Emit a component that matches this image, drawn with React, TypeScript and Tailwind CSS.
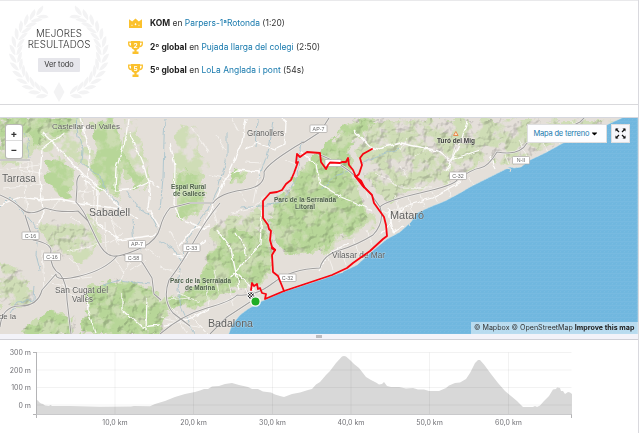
import { FaCaretDown } from 'react-icons/fa';

type Shape = 'crown' | 'cup';

interface Achievement {
  icon: Shape;
  rank?: string;
  title: string;
  segment: string;
  time: string;
}

const achievements: Achievement[] = [
  { icon: 'crown', title: 'KOM', segment: 'Parpers-1ªRotonda', time: '1:20' },
  { icon: 'cup', rank: '2', title: '2º global', segment: 'Pujada llarga del colegi', time: '2:50' },
  { icon: 'cup', rank: '5', title: '5º global', segment: 'LoLa Anglada i pont', time: '54s' },
];

function AchievementIcon({ icon, rank }: { icon: Shape; rank?: string }) {
  if (icon === 'crown') {
    return (
      <svg width="15" height="15" viewBox="0 0 15 15" fill="#fbc12d">
        <path d="M1 3.2 4.2 5.4 7.5 2.6l3.3 2.8L14 3.2V12H1z" />
        <path d="M7.5 7 8.500 8.200 7.5 9.400 6.500 8.200zM4 8.500l.7.7-.7.7-.7-.7zM11 8.500l.7.7-.7.7-.7-.7z" fill="#fff" />
      </svg>
    );
  }
  return (
    <svg width="15" height="15" viewBox="0 0 15 15" fill="#fbc12d">
      <path d="M3 1h9v4.5c0 2.3-1.6 4-3.4 4.4v1.6h1.9V14h-6v-2.5h1.9V9.900C4.600 9.500 3 7.800 3 5.500z" />
      <path d="M3 2.200H.7v1.500c0 1.600 1 2.700 2.800 3M12 2.200h2.300v1.500c0 1.600-1 2.700-2.800 3" fill="none" stroke="#fbc12d" strokeWidth="1.300" />
      <text x="7.500" y="7.600" textAnchor="middle" fontSize="6.500" fontWeight="700" fontFamily="Inter, sans-serif" fill="#fff">
        {rank}
      </text>
    </svg>
  );
}

const leafAngles = Array.from({ length: 14 }, (_, i) => 26 + i * 10.3);

function Laurel() {
  return (
    <svg className="absolute inset-0" width="104" height="102" viewBox="0 0 104 102" fill="#f3f3f4">
      {[1, -1].map((side) => (
        <g key={side} transform={`translate(52 51) scale(${side} 1)`}>
          {leafAngles.map((angle) => (
            <g key={angle} transform={`rotate(${angle}) translate(0 -43)`}>
              <path d="M4 -.4Q2-6-6.500-6.800Q-5.500-.8 4-.4z" />
              <path d="M4 .4Q2 5.500-6.500 6.500Q-5.500 1 4 .4z" />
            </g>
          ))}
        </g>
      ))}
      <path d="M52 80l5.500 10-5.500 10-5.500-10z" />
    </svg>
  );
}

function BestResults() {
  return (
    <section className="flex h-[105px] border-y border-t-[#e9e9eb] border-b-[#d9d9dc]">
      <div className="relative ml-[7px] mt-px flex h-[102px] w-[104px] flex-col items-center pt-[25.500px]">
        <Laurel />
        <h3 className="relative text-center text-[9.800px] font-light leading-[11.500px] text-[#333]">
          MEJORES
          <br />
          RESULTADOS
        </h3>
        <button className="relative mt-[7px] h-[14px] w-[42px] rounded-[1px] bg-[#e6e6eb] text-[7.400px] leading-[14px] text-[#333]">
          Ver todo
        </button>
      </div>
      <ul className="ml-[17px] mt-[11px] flex flex-col">
        {achievements.map((item) => (
          <li key={item.segment} className="flex h-[23.500px] items-center gap-[7px] whitespace-nowrap text-[8.450px] text-[#333]">
            <AchievementIcon icon={item.icon} rank={item.rank} />
            <span>
              <b className="font-bold text-[#222]">{item.title}</b> en <a className="text-[#1779ad]">{item.segment}</a> ({item.time})
            </span>
          </li>
        ))}
      </ul>
    </section>
  );
}

const sea =
  'M638 116H626L600 128 563 143 545 153 530 160 521 167 514 168 510 167 480 182 470 187 460 193 445 201 430 207 417 213 411 222 400 232 387 239 370 253 357 265 340 273 320 280 283 292 260 302 248 309 240 315 232 325 228 336H638z';

// wooded hills, dense
const forests = [
  'M0 118H75L66 134 48 136 38 147 30 132 0 150z',
  'M48 162 62 158 73 170 70 188 75 198 66 199 56 190 49 180z',
  'M92 124 112 118 122 145 130 165 146 182 136 188 122 168 117 198 102 184 92 168 98 150z',
  'M177 178 188 172 201 175 206 208 196 213 184 218 176 210z',
  'M231 186 237 173 245 172 243 179 235 186z',
  'M273 203 291 190 302 168 322 154 345 128 358 119 376 120 350 148 352 178 366 206 368 222 344 235 320 250 289 256 279 244 270 228z',
  'M88 288 110 282 128 282 152 288 160 302 200 286 208 256 222 240 236 232 265 232 270 250 272 272 257 281 240 287 216 296 206 302 194 310 184 304 166 312 160 334H80L88 310z',
  'M28 325 52 313 74 317 72 334H22z',
];

// scrub and lighter slopes
const slopes = [
  'M0 118H82L86 142 66 158 38 148 20 165 0 160z',
  'M48 148 92 150 108 176 122 200 110 197 88 170z',
  'M370 120H620L596 126 540 150 500 164 486 157 460 178 440 184 410 190 386 202 368 178 358 150z',
  'M36 225 55 222 66 228 97 226 88 245 70 257 54 252 50 242z',
  'M0 262 20 270 36 296 30 305 0 308z',
  'M64 222 92 216 104 240 85 262 65 255z',
  'M215 223 262 208 274 230 268 278 244 290 218 280 208 250z',
  'M178 125 196 128 198 150 210 162 196 176 174 184 175 156z',
  'M123 123 135 120 145 150 152 180 145 190 125 160z',
  'M316 250 348 228 374 214 378 224 344 240 330 252z',
];

const highways = [
  'M0 195Q14 201 22 209T45 208Q60 213 78 211L88 221',
  'M80 175Q76 178 77 187L76 202Q84 211 87 219L97 240Q104 255 113 256T143 247Q157 240 160 228T170 208L190 203 213 203Q220 193 243 190T264 172Q267 165 287 152T303 143L320 132 329 118',
  'M117 256Q105 270 80 276T56 274L42 290Q38 306 20 306T0 327',
  'M25 215L33 240Q50 243 51 250 49 268 60 274 67 283 67 300L71 334',
  'M123 255Q140 257 144 265L152 278 154 294 161 300',
  'M160 334Q182 315 207 308T237 295Q255 297 273 283T320 268Q323 255 340 250T373 235Q385 222 380 207Q385 201 420 193T457 180Q472 169 480 168T497 152Q520 156 527 143L555 134 580 122 586 116',
  'M220 203Q207 218 193 243T169 280Q162 300 173 313L190 326',
  'M210 334L227 317 250 302M0 160H30',
  'M318 154Q343 164 355 176T380 207',
];

const mainRoads = [
  'M0 205 20 197 42 200 60 199 80 203 120 209M42 132 66 156 84 176 104 190 117 205 138 220',
  'M66 133 42 148 40 180 43 212 38 225',
  'M170 143 175 166 174 205 180 218 205 229M246 118 242 142 225 180 204 225',
  'M246 148 258 143 274 149 285 144 286 122 280 117M224 178 238 170 260 172',
  'M128 118 126 138 116 168 115 190 136 188 150 182 160 188M130 132 145 170 150 190 148 208 160 228',
  'M80 118 90 150 88 178M84 180 98 190 97 224 120 240 155 235',
  'M122 293 122 310 142 327 160 325M147 298 146 330M87 290 88 312 96 334',
  'M180 246 192 230 210 226M166 325 194 317 216 305M173 255 185 257 205 240',
  'M217 230 231 249 236 272 240 290M236 232 244 245 245 255',
  'M300 151 316 165 320 184M354 130 370 147 378 149 400 143 438 151 450 160 480 150',
  'M380 235 388 228 393 217 408 205 432 198 460 182M388 207 393 231 404 226M318 271 332 251 348 243',
  'M467 121 462 138 446 171M490 155 495 169M320 184 341 197 372 210',
  'M262 210 260 245 230 278M236 272 258 293 275 282',
];

const localRoads = [
  'M16 162H32V180M18 170 43 173M20 163 22 184M0 170 40 165M28 160 29 178M2 188 45 184M25 185 27 213M60 199 50 212M77 192 100 190M86 178 83 205M95 181 93 224M70 217 81 223M104 212 121 230M112 205 98 216M42 250 44 290M52 275 68 280 92 277M50 283 86 290M57 290 80 298M66 252 112 241 123 234M70 258 80 270M105 222 106 250M108 212 119 245M115 259 125 274M130 261 119 284M145 248 160 258M146 260 130 270',
  'M169 231 184 257M160 267 182 274M177 293 200 302M167 300 190 298M173 308 194 331M160 318 202 327M190 316 208 334M214 270 219 293M206 280 209 308M229 284 234 306M244 289 254 299M176 315 187 334M245 162 261 163M260 168 253 203M239 190 246 203M266 196 252 208 231 213M206 174 232 180M212 202 217 224M231 118 239 132M216 135 225 150M191 128 204 144 208 153M285 160 296 164',
  'M362 182 368 198M376 173 400 187 432 188M380 209 400 222M386 213 402 208M395 195 402 218M409 197 413 212M421 194 424 207M432 192 438 203M447 181 450 197M327 253 333 269M341 248 346 266M354 239 360 257M367 231 373 246M456 143 448 171M426 148 415 157M407 138 400 150M519 141 529 157M538 135 548 151M552 131 560 144M570 120 578 134M469 177 474 185M401 166 408 180M505 154 509 165',
];

const rivers = [
  'M25 133Q31 142 28 150L30 158M76 118 78 137 83 149 82 163 101 177 106 192 118 203 120 217',
  'M0 207 11 196 22 212 38 230 36 255 40 270M125 190 138 207 152 217 160 232',
  'M165 118 164 139 163 178 160 210M227 133 227 157 218 189 206 213 187 240 180 267 178 290 181 307 194 334',
  'M301 141 297 177 282 203 260 206 240 208M258 120 256 148M160 240 175 250 180 261M132 220 134 245 142 250',
  'M320 190 336 176 348 171M360 163 383 154 400 148M103 285 120 280 150 284M10 313 18 302 34 300 35 286M274 122 268 152 258 180',
];

const route =
  'M372 149L363 154 360 158 362 165 359 174 356 177 353 170 349 165 348 158 346 162 342 162 340 163 330 162.500 328 165 326 169 321 162 320 153 307 152 300 157 297 154 296 163 298 162 294 173 291 180 286 184 282 190 277 192 270 193 263 201 263 218 268 225 269 229 271 231 270 240 272 247 275 250 272 255 273 272 278 276 284 291';
const coastRoute =
  'M355 176L362 185 372 195 374 203 384 217 386 225 387 236 383 239 370 251 353 263 347 268 332 275 320 279 284 291 265 299 266 294 262 293 260 288 258 289 257 284 254 286 252 283 251 290';

interface Label {
  text: string;
  x: number;
  y: number;
  w: number;
  size: number;
  kind?: 'park' | 'peak';
}

const labels: Label[] = [
  { text: 'Castellar del Vallès', x: 52, y: 129, w: 68, size: 8 },
  { text: 'Tarrasa', x: 2, y: 182, w: 34, size: 10.5 },
  { text: 'Sabadell', x: 89, y: 216, w: 41, size: 10.5 },
  { text: 'Granollers', x: 247, y: 136, w: 37, size: 8.3 },
  { text: 'Mataró', x: 390, y: 219, w: 34, size: 11 },
  { text: 'Vilasar de Mar', x: 332, y: 258, w: 53, size: 8.3 },
  { text: 'San Cugat del', x: 55, y: 293, w: 53, size: 8.3 },
  { text: 'Vallés', x: 72, y: 302, w: 21, size: 8.3 },
  { text: 'Badalona', x: 208, y: 327, w: 45, size: 10.5 },
  { text: 'de la', x: -1, y: 319, w: 17, size: 8 },
  { text: 'Espai Rural', x: 171, y: 189, w: 35, size: 6.3, kind: 'park' },
  { text: 'de Gallecs', x: 173, y: 196, w: 32, size: 6.3, kind: 'park' },
  { text: 'Parc de la Serralada', x: 274, y: 202, w: 62, size: 6.3, kind: 'park' },
  { text: 'Litoral', x: 295, y: 209, w: 20, size: 6.3, kind: 'park' },
  { text: 'Parc de la Serralada', x: 170, y: 283, w: 61, size: 6.3, kind: 'park' },
  { text: 'de Marina', x: 185, y: 290, w: 30, size: 6.3, kind: 'park' },
  { text: 'Turó del Mig', x: 437, y: 143, w: 38, size: 6.3, kind: 'peak' },
];

const labelColors = { city: '#60605f', park: '#4d5f49', peak: '#3c3c3c' };

const shields: [string, number, number][] = [
  ['AP-7', 310, 125],
  ['C-32', 449.5, 172],
  ['N-II', 512.5, 156.5],
  ['C-16', 22, 232],
  ['C-16', 43.5, 253],
  ['AP-7', 128.5, 240.5],
  ['C-58', 125, 254],
  ['C-33', 183, 244],
  ['C-32', 279, 274],
];

function TerrainMap() {
  return (
    <svg className="block" width="638" height="216" viewBox="0 118 638 216">
      <defs>
        <filter id="patchy" x="-5%" y="-5%" width="110%" height="110%" colorInterpolationFilters="sRGB">
          <feTurbulence type="fractalNoise" baseFrequency="0.075" numOctaves="4" seed="7" result="noise" />
          <feDisplacementMap in="SourceGraphic" in2="noise" scale="18" xChannelSelector="R" yChannelSelector="G" result="moved" />
          <feColorMatrix in="noise" values="0 0 0 0 0  0 0 0 0 0  0 0 0 0 0  6 0 0 0 -2.2" result="mask" />
          <feComposite in="moved" in2="mask" operator="in" />
        </filter>
        <filter id="ragged" colorInterpolationFilters="sRGB">
          <feTurbulence type="fractalNoise" baseFrequency="0.1" numOctaves="3" seed="3" result="noise" />
          <feDisplacementMap in="SourceGraphic" in2="noise" scale="13" xChannelSelector="R" yChannelSelector="G" />
        </filter>
        <filter id="relief" colorInterpolationFilters="sRGB">
          <feTurbulence type="fractalNoise" baseFrequency="0.1" numOctaves="4" seed="12" result="noise" />
          <feColorMatrix in="noise" values="0 0 0 0 0  0 0 0 0 0  0 0 0 0 0  1 0 0 0 0" result="height" />
          <feDiffuseLighting in="height" surfaceScale="7" diffuseConstant="1.5" lightingColor="#fff" result="light">
            <feDistantLight azimuth="225" elevation="55" />
          </feDiffuseLighting>
          <feDisplacementMap in="SourceGraphic" in2="noise" scale="14" xChannelSelector="R" yChannelSelector="G" result="area" />
          <feComposite in="light" in2="area" operator="in" />
        </filter>
        <filter id="wobble" colorInterpolationFilters="sRGB">
          <feTurbulence type="fractalNoise" baseFrequency="0.13" numOctaves="2" seed="5" result="noise" />
          <feDisplacementMap in="SourceGraphic" in2="noise" scale="5" xChannelSelector="R" yChannelSelector="G" />
        </filter>
        <pattern id="waves" width="4" height="4" patternUnits="userSpaceOnUse">
          <path d="M0 1 2 2 4 1M0 3 1 4" fill="none" stroke="#82bee3" strokeWidth=".5" />
        </pattern>
        <pattern id="flag" width="3" height="3" patternUnits="userSpaceOnUse">
          <path d="M0 0h1.500v1.500H0zM1.500 1.500H3V3H1.500z" fill="#222" />
        </pattern>
      </defs>

      <path d="M0 118H638V334H0z" fill="#e4dfd9" />
      <g filter="url(#patchy)" fill="#cfddb6">
        {slopes.map((d) => (
          <path key={d} d={d} />
        ))}
      </g>
      <g filter="url(#ragged)" fill="#cbdcb1">
        {forests.map((d) => (
          <path key={d} d={d} />
        ))}
      </g>
      <g filter="url(#patchy)" fill="#b7d698">
        {forests.map((d) => (
          <path key={d} d={d} />
        ))}
      </g>
      <g filter="url(#relief)" opacity=".17" className="mix-blend-multiply">
        {[forests[0], forests[5], forests[6], forests[7], slopes[2], slopes[3], slopes[4], slopes[6]].map((d) => (
          <path key={d} d={d} />
        ))}
      </g>

      <g fill="none" strokeLinejoin="round">
        <g filter="url(#wobble)">
          {rivers.map((d) => (
            <path key={d} d={d} stroke="#a3c2cd" strokeWidth=".8" />
          ))}
          {localRoads.map((d) => (
            <path key={d} d={d} stroke="#f7f5f3" strokeWidth=".8" />
          ))}
          {mainRoads.map((d) => (
            <path key={d} d={d} stroke="#fdfcfb" strokeWidth="1.3" />
          ))}
        </g>
        {highways.map((d) => (
          <path key={d} d={d} stroke="#f5f4f2" strokeWidth="2.2" />
        ))}
        {highways.map((d) => (
          <path key={d} d={d} stroke="#a19f9e" strokeWidth="1.1" />
        ))}
      </g>

      <path d={sea} fill="#70b7df" stroke="#d9e5e5" strokeWidth=".6" />
      <path d={sea} fill="url(#waves)" />
      <path d="M506 168l5 1-1 3M408 221l2 5M340 273l3-1" fill="none" stroke="#e4dfd9" strokeWidth="1" />

      <g fontFamily="'Liberation Sans', sans-serif">
        {shields.map(([name, x, y]) => (
          <g key={`${x}-${y}`}>
            <rect x={x} y={y} width="17" height="7.500" rx=".8" fill="#fff" stroke="#aaa8a5" strokeWidth=".7" />
            <text x={x + 8.5} y={y + 5.7} textAnchor="middle" fontSize="5.300" fill="#666">
              {name}
            </text>
          </g>
        ))}
        <rect x="325" y="159.500" width="16" height="7" fill="#fff" stroke="#aaa8a5" strokeWidth=".6" />
        {labels.map(({ text, x, y, w, size, kind }) => (
          <text
            key={`${text}-${y}`}
            x={x}
            y={y}
            textLength={w}
            lengthAdjust="spacingAndGlyphs"
            fontSize={size}
            fontWeight={kind ? 700 : 400}
            fill={labelColors[kind ?? 'city']}
            stroke="#fff"
            strokeOpacity=".35"
            strokeWidth="1"
            paintOrder="stroke"
          >
            {text}
          </text>
        ))}
      </g>
      <path d="M455.800 131.500l2.300 4h-4.600z" fill="#fbe3cf" stroke="#e88b4d" strokeWidth="1" />

      <g fill="none" stroke="#f80510" strokeWidth="1.800" strokeLinejoin="round" strokeLinecap="round">
        <path d={route} />
        <path d={coastRoute} />
        <path d="M357 178l4 3 3 6M272 248l3 2" strokeWidth="2.200" />
      </g>
      <circle cx="251" cy="295.500" r="4.200" fill="#fff" />
      <circle cx="251" cy="295.500" r="3.400" fill="url(#flag)" />
      <circle cx="255.500" cy="301.500" r="4.700" fill="#20ad24" stroke="#fff" strokeWidth="1.300" />
    </svg>
  );
}

function MapPanel() {
  return (
    <section className="relative h-[217px] border-t border-[#d5d7de]">
      <TerrainMap />
      <div className="absolute left-[6px] top-[7px] flex h-[33px] w-[16px] flex-col rounded-[2px] bg-white text-center text-[10px] font-bold leading-[16px] text-[#333] shadow-[0_0_0_1px_#b9b8b5]">
        <button className="h-4 border-b border-[#ddd]">+</button>
        <button className="h-4">−</button>
      </div>
      <div className="absolute right-[8px] top-[6px] flex gap-[4px]">
        <button className="flex h-[19px] w-[80px] items-center justify-between whitespace-nowrap border border-[#dededf] bg-[#fdfdff] pl-[5.500px] pr-[7px] text-[7.500px] tracking-[-0.2px] text-[#1779ad]">
          Mapa de terreno
          <FaCaretDown className="size-[9px] shrink-0 text-black" />
        </button>
        <button className="flex h-[19px] w-[19px] items-center justify-center border border-[#dededf] bg-[#f6f6fa]">
          <svg width="11" height="11" viewBox="0 0 11 11" fill="#111" stroke="#111" strokeWidth="1.200">
            <path d="M1 1l3 3M10 1 7 4M1 10l3-3M10 10 7 7" />
            <path d="M.5.5h3L.5 3.500zM10.500.5h-3l3 3zM.5 10.500h3l-3-3zM10.500 10.500h-3l3-3z" stroke="none" />
          </svg>
        </button>
      </div>
      <div className="absolute bottom-0 right-0 h-[12px] w-[167px] whitespace-nowrap bg-white/50 pl-[3px] text-[7.100px] leading-[12px] text-[#333]">
        © Mapbox © OpenStreetMap <b className="font-bold text-[#222]">Improve this map</b>
      </div>
    </section>
  );
}

const elevation =
  'M36.500 400 38 400.500 39 402 41 403.500 43 404 45 405.500 49 406 50.500 405 52 406 70 406 100 406.700 131 406.500 134 406 150 406.300 155 404 165 401 175 397 185 394 195 392 200 390.500 204 389 208 389 212 386.500 219 386 225 384 232 383 239 385 248 387 252 389 258 389 263 391.500 271 392.500 275 394.500 280 396 284 397 292 394 300 392.500 308 390 312 389 316 384.500 320 382 326 375 330 371 336 363 342 356.500 344 356 346 356.500 350 360 354 364 359 368 366 377 371 380 376 382.500 379 384.500 382 384 384 382 387 386 391 387 399 387 406 388.500 413 388 418 389.500 424 389.500 429 391 439 391 446 388 449 385.500 455 383 460 382.500 466 379 470 373 475 363 478 360 480 360 484 364.500 491 374 498 383 505 391 511 396 517 401 523 407 533 407 535 406 537 407 540 405.500 544 401 549 396 553 389.500 556 389 557 387.500 560 388 561 391 563 391 565 394 568 392 570 392.500 572 394V414.500H36.500z';

const gridY = [
  { y: 352.5, label: '300 m' },
  { y: 370, label: '200 m' },
  { y: 387.5, label: '100 m' },
  { y: 405, label: '0 m' },
];

const gridX = [
  { x: 115, label: '10,0 km' },
  { x: 193.5, label: '20,0 km' },
  { x: 272.5, label: '30,0 km' },
  { x: 351, label: '40,0 km' },
  { x: 429.5, label: '50,0 km' },
  { x: 508.5, label: '60,0 km' },
];

function ElevationChart() {
  return (
    <svg className="block" width="638" height="93" viewBox="0 340 638 93" fontFamily="Inter, sans-serif" fontSize="7" fill="#707075">
      <path d={elevation} fill="#d8d8d8" />
      {gridY.map(({ y, label }) => (
        <g key={label}>
          <path d={`M36.500 ${y}H571.500`} stroke="#000" strokeOpacity=".05" />
          <text x="31" y={y + 2.7} textAnchor="end">
            {label}
          </text>
        </g>
      ))}
      {gridX.map(({ x, label }) => (
        <g key={label}>
          <path d={`M${x} 352.500V414`} stroke="#000" strokeOpacity=".05" />
          <text x={x} y="424.700" textAnchor="middle">
            {label}
          </text>
        </g>
      ))}
      <path d="M33 352.500h3.500M33 414.500h3.500M36.500 352V418M571.500 414v4" fill="none" stroke="#b4b4b6" />
      <path d="M36.500 414.500h535" stroke="#c9c9cb" />
    </svg>
  );
}

export default function App() {
  return (
    <div className="h-[433px] w-[640px] overflow-hidden bg-white font-['Inter',sans-serif]">
      <main className="h-[433px] w-[639px] border-r border-[#d9d9de]">
        <BestResults />
        <div className="h-3" />
        <MapPanel />
        <div className="flex h-[6px] items-center justify-center border-b border-[#d0d0d6] bg-[#f3f3f9]">
          <div className="h-[3px] w-[6px] bg-[#bcbcc0]" />
        </div>
        <ElevationChart />
      </main>
    </div>
  );
}
